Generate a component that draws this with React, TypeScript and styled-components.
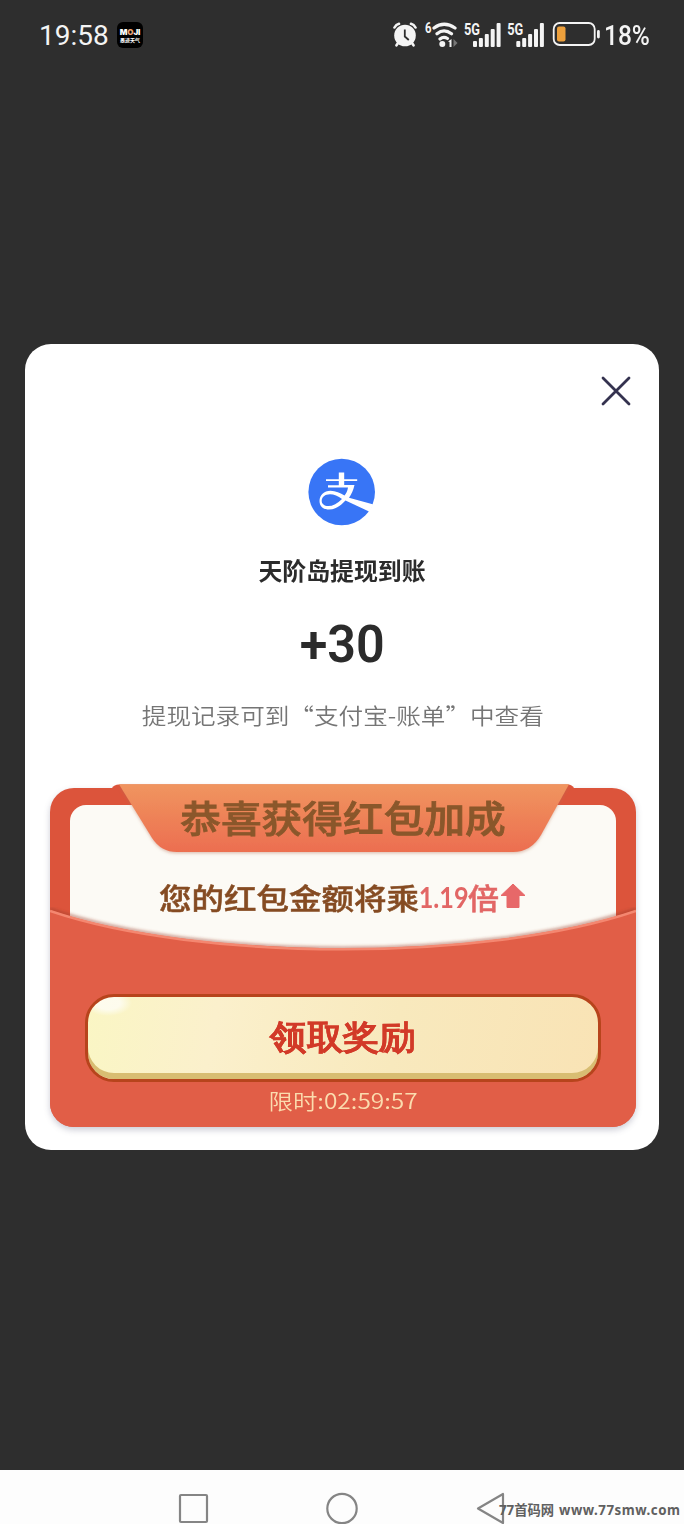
import React from "react";
import styled, { createGlobalStyle } from "styled-components";

const cjk = `"Noto Sans CJK SC", "Noto Sans", sans-serif`;

const GlobalStyle = createGlobalStyle`
  * { box-sizing: border-box; }
  body { margin: 0; background: #2e2e2e; font-family: ${cjk}; }
`;

const Screen = styled.main`
  width: 684px;
  height: 1524px;
  display: flex;
  flex-direction: column;
  overflow: hidden;
  background: #2e2e2e;
`;

const StatusBar = styled.header`
  height: 344px;
  flex: none;
  display: flex;
  align-items: flex-start;
  padding: 19px 34px 0 39px;
  color: #f4f4f4;
  font-family: Roboto, sans-serif;
  line-height: 34px;
`;

const Clock = styled.time`
  font-size: 28px;
  font-weight: 450;
  letter-spacing: 0;
  width: 78px;
`;

const WeatherBadge = styled.div`
  width: 26px;
  height: 26px;
  margin-top: 3px;
  border-radius: 6px;
  background: #000;
  color: #fff;
  display: flex;
  flex-direction: column;
  align-items: center;
  justify-content: center;
  gap: 1px;
`;

const BadgeName = styled.span`
  font: 900 8px/8px Inter, sans-serif;
  letter-spacing: -0.1px;
  i { font-style: normal; color: #e9a070; }
`;

const BadgeSub = styled.span`
  font: 700 5px/6px ${cjk};
`;

const StatusIcons = styled.div`
  margin-left: auto;
  display: flex;
  align-items: flex-start;
  svg { display: block; }
`;

const Battery = styled.span`
  font-size: 28px;
  font-weight: 500;
  width: 46px;
  margin-left: 3px;
  white-space: nowrap;
  transform: scaleX(0.875);
  transform-origin: left;
`;

const Card = styled.section`
  width: 634px;
  height: 806px;
  flex: none;
  margin-left: 25px;
  border-radius: 26px;
  background: #fff;
  display: flex;
  flex-direction: column;
  align-items: center;
`;

const CloseButton = styled.button`
  align-self: flex-end;
  width: 32px;
  height: 32px;
  margin: 31px 27px 0 0;
  padding: 0;
  border: 0;
  background: none;
  svg { display: block; }
`;

const Logo = styled.svg`
  display: block;
  width: 68px;
  height: 68px;
  margin-top: 51px;
  flex: none;
`;

const Line = styled.div<{ $size: number; $height: number; $top?: number; $stretch?: number; $weight?: number; $color: string }>`
  flex: none;
  white-space: nowrap;
  font-size: ${(p) => p.$size}px;
  height: ${(p) => p.$height}px;
  line-height: ${(p) => p.$height}px;
  margin-top: ${(p) => p.$top ?? 0}px;
  font-weight: ${(p) => p.$weight ?? 400};
  color: ${(p) => p.$color};
  transform: scaleX(${(p) => p.$stretch ?? 1});
`;

const Amount = styled(Line)`
  font-family: Roboto, sans-serif;
`;

const RoundLine = styled(Line)<{ $stroke: number }>`
  -webkit-text-stroke: ${(p) => p.$stroke}px currentColor;
  stroke-linejoin: round;
`;

const Hint = styled(Line)`
  margin-left: 2px;
`;

const Envelope = styled.div`
  width: 586px;
  height: 339px;
  flex: none;
  margin: 59px 0 0 2px;
  border-radius: 24px;
  background: #dc543b;
  box-shadow: 0 3px 6px rgba(90, 90, 120, 0.3);
  display: flex;
  flex-direction: column;
  align-items: center;
`;

const Paper = styled.div`
  width: 546px;
  height: 150px;
  flex: none;
  margin-top: 17px;
  border-radius: 16px 16px 0 0;
  background: #fcfaf5;
  display: flex;
  flex-direction: column;
  align-items: center;
`;

const Tab = styled.div`
  width: 464px;
  height: 72px;
  flex: none;
  margin-top: -21px;
  display: grid;
  justify-items: center;
  > * { grid-area: 1 / 1; }
`;

const Multiplier = styled.div`
  display: flex;
  align-items: center;
  width: 367px;
  height: 40px;
  margin: 21px 2px 0 0;
`;

const Slot = styled.div<{ $width: number }>`
  width: ${(p) => p.$width}px;
  flex: none;
  display: flex;
  justify-content: center;
`;

const Rate = styled(RoundLine)`
  font-family: Lato, sans-serif;
`;

const Pocket = styled.div`
  position: relative;
  width: 586px;
  height: 220px;
  flex: none;
  margin-top: -48px;
  display: grid;
  border-radius: 0 0 24px 24px;
  overflow: hidden;
  > * { grid-area: 1 / 1; }
`;

const PocketContent = styled.div`
  display: flex;
  flex-direction: column;
  align-items: center;
  padding-top: 87px;
`;

const ClaimButton = styled.button`
  width: 516px;
  height: 88px;
  flex: none;
  padding: 0 0 3px;
  border: 3px solid #b7441c;
  border-radius: 29px;
  background:
    radial-gradient(ellipse 24px 13px at 20px 6px, rgba(255, 255, 255, 0.7) 50%, transparent 100%),
    linear-gradient(100deg, #faf6c4 0%, #fbf0cc 25%, #f8e9bd 60%, #f9e3b5 100%);
  box-shadow: inset 0 -6px 0 #d8bd72;
  display: flex;
  align-items: center;
  justify-content: center;
`;

const NavBar = styled.nav`
  height: 54px;
  flex: none;
  margin-top: 320px;
  background: #fdfdfd;
  display: grid;
  > * { grid-area: 1 / 1; }
`;

const Watermark = styled.div`
  z-index: 1;
  display: flex;
  justify-content: space-between;
  width: 182px;
  height: 20px;
  margin: 29px 0 0 499px;
  color: #606060;
  font: 700 13.3px/22px "Noto Sans", "Noto Sans CJK SC", sans-serif;
  white-space: nowrap;
`;

const Site = styled.span`
  width: 122px;
  letter-spacing: 0.5px;
`;

const Signal = ({ x }: { x: number }) => (
  <g transform={`translate(${x} 0)`}>
    <text x="0" y="16" fontFamily="Roboto" fontWeight="700" fontSize="16" textLength="16" lengthAdjust="spacingAndGlyphs" fill="#f4f4f4">5G</text>
    {[6, 9, 13, 18, 24].map((h, i) => (
      <rect key={h} x={9 + i * 5.9} y={28 - h} width="4" height={h} rx="1" />
    ))}
  </g>
);

export default function App() {
  return (
    <>
      <GlobalStyle />
      <Screen>
        <StatusBar>
          <Clock>19:58</Clock>
          <WeatherBadge>
            <BadgeName>M<i>O</i>JI</BadgeName>
            <BadgeSub>墨迹天气</BadgeSub>
          </WeatherBadge>
          <StatusIcons>
            <svg width="208" height="32" viewBox="393 0 208 32" fill="#f4f4f4">
              <circle cx="405" cy="16.500" r="10.800" />
              <path d="M394.500 8.500Q396 5.500 399 4.800M411 4.800Q414 5.500 415.500 8.500M398 24l-1.500 2.300M412 24l1.500 2.300" fill="none" stroke="#f4f4f4" strokeWidth="2.600" strokeLinecap="round" />
              <path d="M404.800 10.500v7l4 3.500" fill="none" stroke="#2e2e2e" strokeWidth="1.800" />
              <text x="425" y="13.500" fontFamily="Roboto" fontWeight="700" fontSize="14" textLength="6.500" lengthAdjust="spacingAndGlyphs">6</text>
              <g fill="none" stroke="#f4f4f4" strokeWidth="3.200" strokeLinecap="round">
                <path d="M434 9Q444 1.500 455 9M437 14.800Q444 9 451.500 14.800M440 20Q443.500 17 447.500 19.500" />
              </g>
              <circle cx="442.300" cy="25" r="3" />
              <path d="M448 22.500l3.500-2.500v8h-2v-5z" />
              <path d="M453.500 20v8l4-4z" fill="#777" />
              <Signal x={464} />
              <Signal x={507.300} />
              <rect x="553.700" y="4" width="41" height="22" rx="6" fill="none" stroke="#f4f4f4" strokeWidth="1.800" />
              <rect x="557" y="7.500" width="8.500" height="15" rx="2" fill="#eda03c" />
              <rect x="597" y="11" width="2.800" height="8.500" rx="1.400" />
            </svg>
            <Battery>18%</Battery>
          </StatusIcons>
        </StatusBar>

        <Card>
          <CloseButton aria-label="关闭">
            <svg width="32" height="32" viewBox="0 0 32 32" fill="none" stroke="#34324f" strokeWidth="2.800" strokeLinecap="round">
              <path d="M3 3 29 29M29 3 3 29" />
            </svg>
          </CloseButton>
          <Logo viewBox="0 0 68 68">
            <circle cx="33.700" cy="34" r="33.300" fill="#3875f6" />
            <path d="M30.800 14.500h5.400v6.700h13v1.900h-13v4H46.500c-1.200 5.200-3 9.300-5.500 12.600L65.500 46.500l-4 7.200L37.500 42.500C32 48.500 26.500 51.500 21 51.500c-6 0-9.500-3.500-9.500-8.500 0-6 4.500-10.300 11-10.300 5 0 10 2.500 14 4.800 1.900-2.300 2.900-4.600 3.500-8.100H20v-2.100h10.800v-4.200H18v-1.900h12.800ZM34 41c-4-2.800-8-4.800-12-4.800-5 0-8.300 2.800-8.300 6.600 0 3.200 2.700 5.300 6.500 5.300 4.700 0 9.300-2.500 13.800-7.100Z" fill="#fff" fillRule="evenodd" />
          </Logo>
          <Line $size={24} $height={32} $top={28} $stretch={0.995} $weight={600} $color="#2b2b2b">天阶岛提现到账</Line>
          <Amount $size={51} $height={60} $top={29} $stretch={0.985} $weight={600} $color="#2b2b2b">+30</Amount>
          <Hint $size={22} $height={30} $top={24} $stretch={1.118} $weight={350} $color="#757575">提现记录可到“支付宝-账单”中查看</Hint>

          <Envelope>
            <Paper>
              <Tab>
                <svg width="464" height="80" viewBox="0 0 464 80" overflow="visible">
                  <defs>
                    <linearGradient id="tabFill" x1="0" y1="0" x2="0" y2="1">
                      <stop offset="0" stopColor="#f0955f" />
                      <stop offset="1" stopColor="#ec6e50" />
                    </linearGradient>
                    <filter id="tabShadow" x="-5%" y="-10%" width="110%" height="130%">
                      <feDropShadow dx="0" dy="1.500" stdDeviation="1.800" floodColor="#b46e55" floodOpacity=".4" />
                    </filter>
                  </defs>
                  <path d="M1 4Q3 .5 8 .5H457Q461 .5 463 4V10H1Z" fill="#dc543b" />
                  <path d="M8 .3H458L430 51Q420 68 402 68H66Q50 68 41 54Z" fill="url(#tabFill)" filter="url(#tabShadow)" />
                </svg>
                <RoundLine $size={37} $height={50} $top={8} $stretch={1.100} $weight={500} $stroke={0.800} $color="#8a572b">恭喜获得红包加成</RoundLine>
              </Tab>
              <Multiplier>
                <Slot $width={262}>
                  <RoundLine $size={29} $height={40} $stretch={1.120} $weight={500} $stroke={0.500} $color="#854b22">您的红包金额将乘</RoundLine>
                </Slot>
                <Slot $width={47}>
                  <Rate $size={29} $height={38} $stretch={0.87} $weight={700} $stroke={0} $color="#e26665">1.19</Rate>
                </Slot>
                <Slot $width={32}>
                  <RoundLine $size={29} $height={40} $stretch={1.080} $weight={500} $stroke={0.500} $color="#e26665">倍</RoundLine>
                </Slot>
                <svg width="26" height="26" viewBox="0 0 26 26" fill="#e76869">
                  <path d="M13 0 25 11.500H19V23.500H7V11.500H1Z" stroke="#e76869" strokeLinejoin="round" />
                </svg>
              </Multiplier>
            </Paper>
            <Pocket>
              <svg width="586" height="220" viewBox="0 0 586 220">
                <defs>
                  <filter id="soft" x="-5%" y="-40%" width="110%" height="180%">
                    <feGaussianBlur stdDeviation="1.600" />
                  </filter>
                </defs>
                <path d="M0 2C150 54 436 54 586 2" fill="none" stroke="#9b3e2c" strokeOpacity=".5" strokeWidth="3" filter="url(#soft)" />
                <path d="M0 3C150 54 436 54 586 3V220H0Z" fill="#e15e47" />
                <path d="M0 4C150 55 436 55 586 4" fill="none" stroke="#f48770" strokeWidth="2.500" />
              </svg>
              <PocketContent>
                <ClaimButton>
                  <RoundLine $size={34} $height={44} $stretch={1.070} $weight={700} $stroke={0.200} $color="#d23a28">领取奖励</RoundLine>
                </ClaimButton>
                <Line $size={21} $height={30} $top={3} $stretch={1.165} $weight={350} $color="#fbdcae">限时:02:59:57</Line>
              </PocketContent>
            </Pocket>
          </Envelope>
        </Card>

        <NavBar>
          <svg width="684" height="54" viewBox="0 1470 684 54" fill="none" stroke="#858585" strokeWidth="2.200" strokeLinejoin="round">
            <rect x="180" y="1495" width="27" height="27" rx="1" />
            <circle cx="342" cy="1508.500" r="14.700" />
            <path d="M503 1494V1523L478 1508.500Z" />
          </svg>
          <Watermark>
            <span>77首码网</span>
            <Site>www.77smw.com</Site>
          </Watermark>
        </NavBar>
      </Screen>
    </>
  );
}
